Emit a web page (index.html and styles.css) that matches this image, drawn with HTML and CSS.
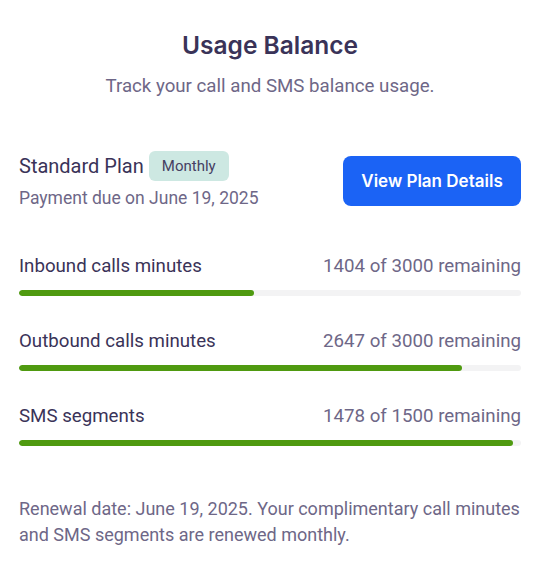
FILE: index.html
```html
<!DOCTYPE html>
<html lang="en">
<head>
<meta charset="utf-8">
<title>Usage Balance</title>
<link rel="stylesheet" href="styles.css">
</head>
<body>
<main class="card">
  <header class="header">
    <h1 class="title">Usage Balance</h1>
    <p class="subtitle">Track your call and SMS balance usage.</p>
  </header>

  <section class="plan">
    <div class="plan-info">
      <div class="plan-name-row">
        <span class="plan-name">Standard Plan</span>
        <span class="badge">Monthly</span>
      </div>
      <div class="plan-due">Payment due on June 19, 2025</div>
    </div>
    <button class="btn-primary" type="button">View Plan Details</button>
  </section>

  <section class="usage">
    <div class="usage-row">
      <div class="usage-head">
        <span class="usage-label">Inbound calls minutes</span>
        <span class="usage-value">1404 of 3000 remaining</span>
      </div>
      <div class="track"><div class="fill" style="width: 46.8%"></div></div>
    </div>
    <div class="usage-row">
      <div class="usage-head">
        <span class="usage-label">Outbound calls minutes</span>
        <span class="usage-value">2647 of 3000 remaining</span>
      </div>
      <div class="track"><div class="fill" style="width: 88.2%"></div></div>
    </div>
    <div class="usage-row">
      <div class="usage-head">
        <span class="usage-label">SMS segments</span>
        <span class="usage-value">1478 of 1500 remaining</span>
      </div>
      <div class="track"><div class="fill" style="width: 98.5%"></div></div>
    </div>
  </section>

  <p class="footnote">Renewal date: June 19, 2025. Your complimentary call minutes and SMS segments are renewed monthly.</p>
</main>
</body>
</html>
```

FILE: styles.css
```css
* { box-sizing: border-box; }

html, body {
  margin: 0;
  padding: 0;
  background: #ffffff;
}

body {
  font-family: Roboto, "Liberation Sans", Arial, sans-serif;
  color: #3a3358;
}

.card {
  width: 547px;
  padding: 31px 26px 0 19px;
}

.header {
  text-align: center;
}

.title {
  margin: 0;
  font-family: Inter, "Open Sans", sans-serif;
  font-size: 24.5px;
  line-height: 28px;
  font-weight: 600;
  color: #3a3358;
}

.subtitle {
  margin: 15px 0 0;
  font-size: 18.7px;
  line-height: 24px;
  color: #6e6787;
}

.plan {
  margin-top: 53px;
  display: flex;
  align-items: center;
  justify-content: space-between;
}

.plan-info {
  display: flex;
  flex-direction: column;
  gap: 5px;
}

.plan-name-row {
  display: flex;
  align-items: center;
  gap: 5px;
}

.plan-name {
  font-size: 20px;
  line-height: 24px;
  color: #3a3358;
}

.badge {
  display: inline-flex;
  align-items: center;
  justify-content: center;
  width: 80px;
  height: 30px;
  background: #cde8e2;
  border-radius: 6px;
  font-size: 15px;
  color: #454063;
}

.plan-due {
  font-size: 17.5px;
  line-height: 24px;
  color: #6e6787;
}

.btn-primary {
  width: 178px;
  height: 50px;
  border: 0;
  border-radius: 8px;
  background: #1b63f5;
  color: #ffffff;
  font-family: Inter, "Open Sans", sans-serif;
  font-size: 17px;
  font-weight: 600;
  cursor: pointer;
}

.usage {
  margin-top: 44px;
  display: flex;
  flex-direction: column;
  gap: 33px;
}

.usage-head {
  display: flex;
  justify-content: space-between;
  align-items: center;
  font-size: 18.7px;
  line-height: 24px;
}

.usage-label { color: #3a3358; }
.usage-value { color: #6e6787; }

.track {
  margin-top: 12px;
  height: 6px;
  border-radius: 3px;
  background: #f3f3f4;
  overflow: hidden;
}

.fill {
  height: 100%;
  border-radius: 3px;
  background: #4f9a10;
}

.footnote {
  margin: 50px -20px 0 0;
  font-size: 18px;
  line-height: 26px;
  color: #6e6787;
}
```
